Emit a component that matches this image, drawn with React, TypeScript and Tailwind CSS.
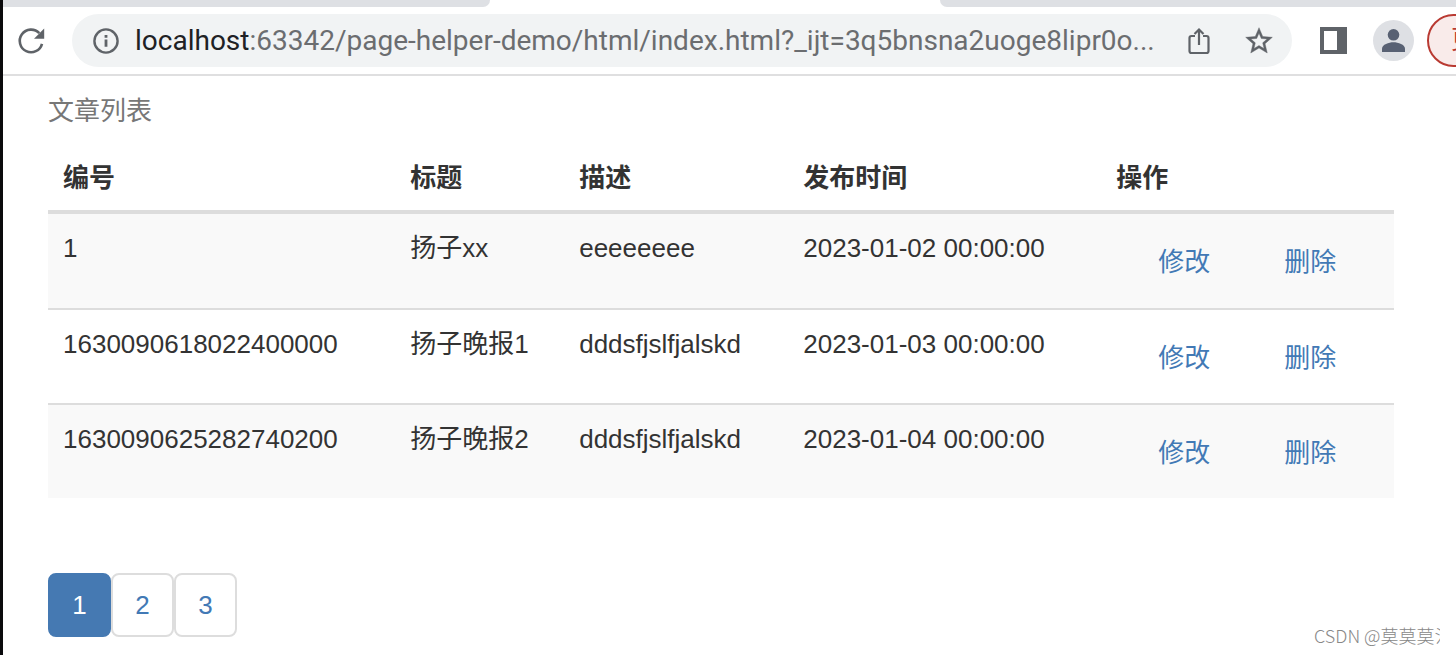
import { useState } from "react";

type Article = { id: string; title: string; description: string; publishedAt: string };

const articles: Article[] = [
  { id: "1", title: "扬子xx", description: "eeeeeeee", publishedAt: "2023-01-02 00:00:00" },
  { id: "1630090618022400000", title: "扬子晚报1", description: "dddsfjslfjalskd", publishedAt: "2023-01-03 00:00:00" },
  { id: "1630090625282740200", title: "扬子晚报2", description: "dddsfjslfjalskd", publishedAt: "2023-01-04 00:00:00" },
];

const columns = [
  { name: "编号", width: "w-[25.8%]" },
  { name: "标题", width: "w-[12.55%]" },
  { name: "描述", width: "w-[16.65%]" },
  { name: "发布时间", width: "w-[23.25%]" },
  { name: "操作", width: "w-[21.75%]" },
];

function TabStrip() {
  return (
    <div className="flex h-[7px] justify-between overflow-hidden">
      <div className="w-[33.5%] rounded-br-xl bg-[#dee0e4]" />
      <div className="w-[35.5%] rounded-bl-xl bg-[#dee0e4]" />
    </div>
  );
}

function ReloadIcon() {
  return (
    <svg className="size-7" viewBox="0 0 28 28" fill="none" aria-hidden="true">
      <path d="M25 16.800A11.300 11.300 0 1 1 22.300 6.200" stroke="#5f6368" strokeWidth="2.600" />
      <path d="M27.200 1.600v10.200H17z" fill="#5f6368" />
    </svg>
  );
}

function InfoIcon() {
  return (
    <svg className="size-7 shrink-0" viewBox="0 0 28 28" fill="none" aria-hidden="true">
      <circle cx="14" cy="14" r="11.6" stroke="#5f6368" strokeWidth="2.4" />
      <path d="M14 12.4v7.4M14 8v2.8" stroke="#5f6368" strokeWidth="2.8" />
    </svg>
  );
}

function ShareIcon() {
  return (
    <svg className="size-7" viewBox="0 0 28 28" fill="none" stroke="#5f6368" strokeWidth="2.2" aria-hidden="true">
      <path d="M10 9H6.500Q4.500 9 4.500 11V24Q4.500 26 6.500 26H21.500Q23.500 26 23.500 24V11Q23.500 9 21.500 9H18" />
      <path d="M14 18V2.500M9.500 7l4.500-4.500L18.500 7" />
    </svg>
  );
}

function StarIcon() {
  return (
    <svg className="size-8" viewBox="0 0 24 24" fill="#5f6368" stroke="#5f6368" strokeWidth="0.3" aria-hidden="true">
      <path d="M22 9.240l-7.190-.62L12 2 9.190 8.630 2 9.240l5.460 4.730L5.820 21 12 17.270 18.180 21l-1.630-7.030L22 9.240zM12 15.400l-3.760 2.270 1-4.280-3.320-2.880 4.380-.38L12 6.100l1.710 4.040 4.380.38-3.320 2.880 1 4.280L12 15.400z" />
    </svg>
  );
}

function Toolbar() {
  return (
    <div className="flex h-[69px] items-center overflow-hidden border-b-2 border-[#dfdfe0] pl-[14px]">
      <button type="button" aria-label="重新加载" className="shrink-0">
        <ReloadIcon />
      </button>
      <div className="ml-[27px] flex h-[53px] min-w-0 flex-1 items-center rounded-full bg-[#f1f3f4] pr-[17px] pl-5">
        <InfoIcon />
        <label htmlFor="address" className="ml-[15px] pt-px font-[Roboto,sans-serif] text-[28px] text-[#202124]">
          localhost
        </label>
        <input
          id="address"
          type="text"
          defaultValue=":63342/page-helper-demo/html/index.html?_ijt=3q5bnsna2uoge8lipr0o..."
          className="min-w-0 flex-1 bg-transparent pt-px font-[Roboto,sans-serif] text-[28px] text-[#6b6d70] outline-none"
        />
        <button type="button" aria-label="分享" className="ml-2 shrink-0">
          <ShareIcon />
        </button>
        <button type="button" aria-label="收藏" className="ml-[30px] shrink-0">
          <StarIcon />
        </button>
      </div>
      <button type="button" aria-label="侧边栏" className="ml-7 shrink-0">
        <svg className="size-[27px]" viewBox="0 0 27 27" aria-hidden="true">
          <path d="M0 0h27v27H0zM4 4v19h13V4z" fill="#5f6368" fillRule="evenodd" />
        </svg>
      </button>
      <button type="button" aria-label="个人资料" className="ml-[26px] shrink-0">
        <svg className="size-[41px]" viewBox="0 0 41 41" aria-hidden="true">
          <circle cx="20.500" cy="20.500" r="20.500" fill="#dee0e4" />
          <circle cx="20.500" cy="14.800" r="5.800" fill="#586173" />
          <path d="M9 32v-3.200c0-4.300 6.800-6.600 11.500-6.600S32 24.500 32 28.800V32z" fill="#586173" />
        </svg>
      </button>
      <div className="ml-[13px] w-[29px] shrink-0 overflow-hidden">
        <button
          type="button"
          className="h-[53px] w-24 rounded-full border-2 border-[#b93a32] bg-[#f9ebea] pl-[22px] text-left text-[26px] text-[#b93a32]"
        >
          更新
        </button>
      </div>
    </div>
  );
}

function ArticleTable() {
  return (
    <table className="w-full table-fixed border-separate border-spacing-0 text-left">
      <caption className="pt-[17px] pb-[13px] text-left leading-[37px] text-[#777777]">文章列表</caption>
      <thead>
        <tr>
          {columns.map((column) => (
            <th
              key={column.name}
              scope="col"
              className={`${column.width} border-b-4 border-[#dddddd] px-[15px] pt-[17px] pb-[13px] leading-[37px] font-bold`}
            >
              {column.name}
            </th>
          ))}
        </tr>
      </thead>
      <tbody className="[&>tr+tr>td]:border-t-2">
        {articles.map((article) => (
          <tr key={article.id} className="h-[95px] first:h-[94px] odd:bg-[#f9f9f9] [&>td]:border-[#dddddd] [&>td]:align-top">
            <td className="px-[15px] pt-4 leading-[37px]">{article.id}</td>
            <td className="px-[15px] pt-4 leading-[37px]">{article.title}</td>
            <td className="px-[15px] pt-4 leading-[37px]">{article.description}</td>
            <td className="px-[15px] pt-4 leading-[37px]">{article.publishedAt}</td>
            <td className="pt-[30px] pl-[57px] leading-[37px] text-[#4279b5]">
              <div className="flex gap-[74px]">
                <a href="#edit">修改</a>
                <a href="#delete">删除</a>
              </div>
            </td>
          </tr>
        ))}
      </tbody>
    </table>
  );
}

function Pagination() {
  const [current, setCurrent] = useState(1);
  return (
    <nav aria-label="分页" className="mt-[75px] flex">
      {[1, 2, 3].map((page) => (
        <button
          key={page}
          type="button"
          aria-current={page === current ? "page" : undefined}
          onClick={() => setCurrent(page)}
          className="h-16 w-[63px] rounded-lg border-2 border-[#dddddd] bg-white text-[#4279b5] aria-[current=page]:border-[#4579b2] aria-[current=page]:bg-[#4579b2] aria-[current=page]:text-white"
        >
          {page}
        </button>
      ))}
    </nav>
  );
}

export default function App() {
  return (
    <div className="relative min-h-screen overflow-hidden border-l-[3px] border-[#0a0a0c] bg-white font-['Liberation_Sans','Noto_Sans_CJK_SC',sans-serif] text-[26px] text-[#333333]">
      <header>
        <TabStrip />
        <Toolbar />
      </header>
      <main className="pr-[62px] pb-4 pl-[45px]">
        <ArticleTable />
        <Pagination />
      </main>
      <p className="absolute right-4 bottom-1.5 w-[126px] overflow-hidden font-['Noto_Sans_CJK_SC',sans-serif] text-[18px] leading-7 font-light whitespace-nowrap text-[#888888]">
        CSDN @莫莫莫氵
      </p>
    </div>
  );
}
